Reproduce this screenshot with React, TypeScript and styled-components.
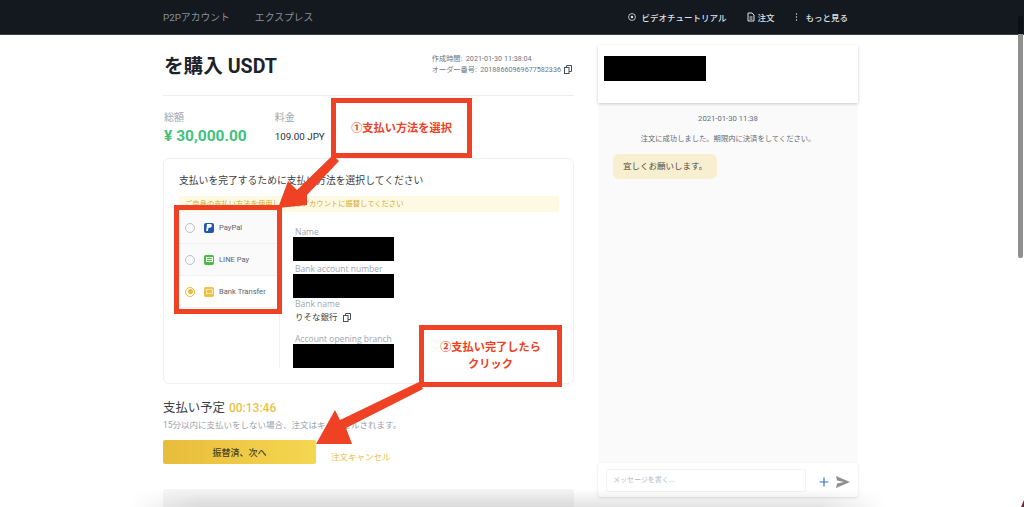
import styled, { createGlobalStyle } from "styled-components";

const GlobalStyle = createGlobalStyle`
    html, body {
        margin: 0;
        padding: 0;
        height: 507px;
        overflow: hidden;
        background: #ffffff;
        font-family: Roboto, "Noto Sans CJK JP", sans-serif;
    }
    * { box-sizing: border-box; }
`;

const Page = styled.div`
    position: relative;
    width: 1024px;
    height: 507px;
    overflow: hidden;
`;

const Header = styled.header`
    height: 35px;
    background: #14181f;
    border-bottom: 1px solid #3c3f44;
    display: flex;
    align-items: center;
    padding: 0 176px 0 163px;
`;

const NavLeft = styled.nav`
    display: flex;
    gap: 25px;
    color: #8a919c;
    font-size: 9.8px;
    flex: 1;
`;

const NavRight = styled.nav`
    display: flex;
    align-items: center;
    gap: 21px;
    color: #dfe2e6;
    font-size: 8.5px;
    font-weight: 500;
`;

const NavItem = styled.span`
    display: flex;
    align-items: center;
    gap: ${props => props.$gap}px;
`;

const Main = styled.main`
    display: flex;
    padding: 10px 0 0 163px;
    gap: 24px;
`;

const OrderColumn = styled.section`
    width: 411px;
    flex: none;
`;

const TitleRow = styled.div`
    height: 51px;
    border-bottom: 1px solid #eceef0;
    display: flex;
    justify-content: space-between;
    padding-right: 2px;
`;

const Title = styled.h1`
    margin: 8px 0 0 1px;
    font-size: 19.6px;
    line-height: 28px;
    font-weight: 700;
    color: #1e2329;
`;

const Meta = styled.div`
    margin-top: 8px;
    font-size: 7.2px;
    line-height: 11px;
    color: #6f7682;
`;

const MetaLine = styled.div`
    display: flex;
    align-items: center;
    gap: 3px;
`;

const Summary = styled.div`
    display: flex;
    gap: 28px;
    height: 62px;
    padding: 15px 0 0 1px;
`;

const SummaryLabel = styled.div`
    font-size: 10px;
    line-height: 14px;
    color: #a0a6b0;
`;

const Amount = styled.div`
    font-size: 15.5px;
    line-height: 22px;
    font-weight: 700;
    color: #3fc27c;
`;

const Fee = styled.div`
    margin-top: 5px;
    font-size: 9.8px;
    line-height: 14px;
    color: #2b3139;
`;

const Card = styled.div`
    height: 226px;
    border: 1px solid #eeeff1;
    border-radius: 6px;
    padding: 15px 14px 0 15px;
`;

const CardTitle = styled.div`
    font-size: 9.8px;
    line-height: 14px;
    color: #3a4048;
`;

const Notice = styled.div`
    margin-top: 8px;
    height: 16px;
    background: #fef9e3;
    color: #d8a92c;
    font-size: 7.3px;
    line-height: 16px;
    padding-left: 6px;
`;

const PayArea = styled.div`
    display: flex;
    height: 156px;
`;

const Methods = styled.div`
    width: 101px;
    flex: none;
    border-right: 1px solid #f0f1f3;
`;

const Method = styled.div`
    height: 32px;
    display: flex;
    align-items: center;
    padding-left: 6px;
    background: ${props => (props.$active ? "#ffffff" : "#fafafa")};
    border-bottom: 1px solid #f1f2f3;
    font-size: 7.6px;
    color: #5b626d;
`;

const Radio = styled.span`
    width: 10px;
    height: 10px;
    border-radius: 50%;
    border: 1px solid ${props => (props.$active ? "#eab93a" : "#bcc0c6")};
    display: flex;
    align-items: center;
    justify-content: center;
    margin-right: 9px;
    &::after {
        content: "";
        width: 5px;
        height: 5px;
        border-radius: 50%;
        background: ${props => (props.$active ? "#eab93a" : "transparent")};
    }
`;

const MethodIcon = styled.span`
    width: 10px;
    height: 10px;
    border-radius: 2px;
    background: ${props => props.$color};
    display: flex;
    align-items: center;
    justify-content: center;
    margin-right: 5px;
`;

const Details = styled.div`
    padding: 14px 0 0 13px;
`;

const FieldLabel = styled.div`
    margin-left: 2px;
    font-family: "Open Sans", sans-serif;
    font-size: 8.5px;
    line-height: 11px;
    color: #a0a6b0;
`;

const Redacted = styled.div`
    background: #000000;
    width: ${props => props.$width}px;
    height: ${props => props.$height}px;
    margin-bottom: ${props => props.$after || 0}px;
`;

const FieldValue = styled.div`
    margin: 2px 0 9px 2px;
    height: 13px;
    font-size: 8.5px;
    line-height: 13px;
    color: #3a4048;
    display: flex;
    align-items: center;
    gap: 5px;
`;

const DueRow = styled.div`
    margin-top: 15px;
    font-size: 12.4px;
    line-height: 18px;
    color: #3a4048;
    display: flex;
    gap: 4px;
`;

const Countdown = styled.span`
    color: #edc146;
    font-size: 12px;
    font-weight: 500;
`;

const DueNote = styled.div`
    margin-top: 2px;
    font-size: 8.5px;
    line-height: 13px;
    color: #9aa0aa;
`;

const ActionRow = styled.div`
    margin-top: 8px;
    display: flex;
    gap: 15px;
    align-items: flex-end;
`;

const PayButton = styled.div`
    width: 153px;
    height: 24px;
    border-radius: 2px;
    background: linear-gradient(90deg, #e8bc3c, #f5d750);
    color: #4a4220;
    font-size: 9px;
    font-weight: 500;
    display: flex;
    align-items: center;
    justify-content: center;
`;

const CancelLink = styled.span`
    font-size: 8.5px;
    line-height: 13px;
    color: #edc146;
`;

const NextPanel = styled.div`
    margin-top: 25px;
    height: 40px;
    background: #f5f5f5;
    border-radius: 3px;
`;

const ChatColumn = styled.aside`
    width: 260px;
    flex: none;
    height: 452px;
    display: flex;
    flex-direction: column;
`;

const ChatHead = styled.div`
    height: 58px;
    background: #ffffff;
    box-shadow: 0 1px 3px rgba(0, 0, 0, 0.2);
    padding: 11px 6px;
    position: relative;
`;

const ChatBody = styled.div`
    flex: 1;
    background: #fafafa;
    padding: 11px 15px 0;
    color: #646a74;
`;

const ChatDate = styled.div`
    text-align: center;
    font-size: 7.7px;
    line-height: 10px;
`;

const ChatNote = styled.div`
    margin-top: 10px;
    text-align: center;
    font-size: 7.3px;
    line-height: 10px;
`;

const Bubble = styled.div`
    display: inline-block;
    margin-top: 10px;
    height: 25px;
    padding: 0 10px;
    border-radius: 6px;
    background: #f8eed0;
    color: #4a4b45;
    font-size: 8.5px;
    line-height: 25px;
`;

const ChatFoot = styled.div`
    height: 34px;
    background: #ffffff;
    box-shadow: 0 1px 3px rgba(0, 0, 0, 0.12);
    border-radius: 0 0 3px 3px;
    display: flex;
    align-items: center;
    padding: 0 8px;
`;

const MessageInput = styled.div`
    width: 200px;
    height: 23px;
    border: 1px solid #f2f3f4;
    border-radius: 2px;
    font-size: 7px;
    line-height: 21px;
    padding-left: 6px;
    color: #b5b9bf;
    margin-right: 13px;
`;

const FootIcons = styled.div`
    display: flex;
    align-items: center;
    gap: 7px;
    margin-top: 4px;
`;

const Scrollbar = styled.div`
    position: absolute;
    top: 16px;
    right: 1px;
    width: 5px;
    height: 242px;
    border-radius: 2px;
    background: linear-gradient(180deg, #0c0f13 18px, #8f8f8f 18px);
`;

const BottomFade = styled.div`
    position: absolute;
    left: 0;
    right: 0;
    bottom: 0;
    height: 18px;
    background: linear-gradient(180deg, rgba(0, 0, 0, 0), rgba(0, 0, 0, 0.11));
    mask-image: linear-gradient(90deg, transparent 130px, #000 200px, #000 820px, transparent 885px);
`;

const Callout = styled.div`
    position: absolute;
    left: ${props => props.$left}px;
    top: ${props => props.$top}px;
    width: ${props => props.$width}px;
    height: ${props => props.$height}px;
    border: 5px solid #ef4123;
    background: ${props => (props.$hollow ? "transparent" : "#ffffff")};
    color: #ef4123;
    font-size: 11.2px;
    font-weight: 700;
    line-height: 17px;
    display: flex;
    flex-direction: column;
    align-items: center;
    justify-content: center;
    text-align: center;
`;

const Arrows = styled.svg`
    position: absolute;
    left: 0;
    top: 0;
`;

const CopyIcon = () => (
    <svg width="8" height="9" viewBox="0 0 8 9" fill="none" stroke="#4a4f57" strokeWidth="1">
        <rect x="0.5" y="2.5" width="4.5" height="6" />
        <path d="M2.5 2.5V0.5H7.5V6.5H5" />
    </svg>
);

const App = () => {
    return (
        <Page>
            <GlobalStyle />
            <Header>
                <NavLeft>
                    <span>P2Pアカウント</span>
                    <span>エクスプレス</span>
                </NavLeft>
                <NavRight>
                    <NavItem $gap={6}>
                        <svg width="8" height="8" viewBox="0 0 10 10" fill="none" stroke="#dfe2e6">
                            <circle cx="5" cy="5" r="4.3" />
                            <circle cx="5" cy="5" r="1.6" fill="#dfe2e6" stroke="none" />
                        </svg>
                        ビデオチュートリアル
                    </NavItem>
                    <NavItem $gap={2}>
                        <svg width="8" height="10" viewBox="0 0 8 10" fill="none" stroke="#dfe2e6">
                            <path d="M1 1H5L7 3V9H1Z" />
                            <path d="M2.5 5H5.5M2.5 7H5.5" />
                        </svg>
                        注文
                    </NavItem>
                    <NavItem $gap={7}>
                        <svg width="3" height="8" viewBox="0 0 3 8" fill="#dfe2e6">
                            <circle cx="1.5" cy="1" r="0.7" />
                            <circle cx="1.5" cy="4" r="0.7" />
                            <circle cx="1.5" cy="7" r="0.7" />
                        </svg>
                        もっと見る
                    </NavItem>
                </NavRight>
            </Header>
            <Main>
                <OrderColumn>
                    <TitleRow>
                        <Title>を購入 USDT</Title>
                        <Meta>
                            <MetaLine>作成時間:&nbsp; 2021-01-30 11:38:04</MetaLine>
                            <MetaLine>オーダー番号:&nbsp; 20188660969677582336 <CopyIcon /></MetaLine>
                        </Meta>
                    </TitleRow>
                    <Summary>
                        <div>
                            <SummaryLabel>総額</SummaryLabel>
                            <Amount>¥ 30,000.00</Amount>
                        </div>
                        <div>
                            <SummaryLabel>料金</SummaryLabel>
                            <Fee>109.00 JPY</Fee>
                        </div>
                    </Summary>
                    <Card>
                        <CardTitle>支払いを完了するために支払い方法を選択してください</CardTitle>
                        <Notice>ご自身の支払い方法を使用し、次のアカウントに振替してください</Notice>
                        <PayArea>
                            <Methods>
                                <Method>
                                    <Radio />
                                    <MethodIcon $color="#2257b0">
                                        <svg width="6" height="7" viewBox="0 0 6 7" fill="#ffffff">
                                            <path d="M1 0H4.2C5.4 0 6 .8 5.8 1.9 5.6 3 4.8 3.8 3.4 3.8H2.4L2 7H.2Z" />
                                        </svg>
                                    </MethodIcon>
                                    PayPal
                                </Method>
                                <Method>
                                    <Radio />
                                    <MethodIcon $color="#45bd3c">
                                        <svg width="7" height="5" viewBox="0 0 7 5" fill="none" stroke="#ffffff">
                                            <rect x="0.5" y="0.5" width="6" height="4" />
                                            <path d="M1 2.5H6" />
                                        </svg>
                                    </MethodIcon>
                                    LINE Pay
                                </Method>
                                <Method $active>
                                    <Radio $active />
                                    <MethodIcon $color="#edc146">
                                        <svg width="7" height="5" viewBox="0 0 7 5" fill="none" stroke="#f9e7ae">
                                            <rect x="0.5" y="0.5" width="6" height="4" />
                                        </svg>
                                    </MethodIcon>
                                    Bank Transfer
                                </Method>
                            </Methods>
                            <Details>
                                <FieldLabel>Name</FieldLabel>
                                <Redacted $width={101} $height={24} $after={2} />
                                <FieldLabel>Bank account number</FieldLabel>
                                <Redacted $width={101} $height={24} />
                                <FieldLabel>Bank name</FieldLabel>
                                <FieldValue>りそな銀行 <CopyIcon /></FieldValue>
                                <FieldLabel>Account opening branch</FieldLabel>
                                <Redacted $width={101} $height={24} />
                            </Details>
                        </PayArea>
                    </Card>
                    <DueRow>
                        支払い予定 <Countdown>00:13:46</Countdown>
                    </DueRow>
                    <DueNote>15分以内に支払いをしない場合、注文はキャンセルされます。</DueNote>
                    <ActionRow>
                        <PayButton>振替済、次へ</PayButton>
                        <CancelLink>注文キャンセル</CancelLink>
                    </ActionRow>
                    <NextPanel />
                </OrderColumn>
                <ChatColumn>
                    <ChatHead>
                        <Redacted $width={102} $height={25} />
                    </ChatHead>
                    <ChatBody>
                        <ChatDate>2021-01-30 11:38</ChatDate>
                        <ChatNote>注文に成功しました。期限内に決済をしてください。</ChatNote>
                        <Bubble>宜しくお願いします。</Bubble>
                    </ChatBody>
                    <ChatFoot>
                        <MessageInput>メッセージを書く...</MessageInput>
                        <FootIcons>
                            <svg width="10" height="10" viewBox="0 0 10 10" stroke="#3d6fd8" strokeWidth="1.2">
                                <path d="M5 0.5V9.5M0.5 5H9.5" />
                            </svg>
                            <svg width="14" height="12" viewBox="0 0 14 12" fill="#8f8f8f">
                                <path d="M0 0L14 6L0 12L1 7.5L8 6L1 4.5Z" />
                            </svg>
                        </FootIcons>
                    </ChatFoot>
                </ChatColumn>
            </Main>
            <Scrollbar />
            <BottomFade />
            <Arrows width="1024" height="507" viewBox="0 0 1024 507" fill="#ef4123">
                <path d="M333 155L339 161L307 195L307 205L278 208L288 181L297 190Z" />
                <path d="M419 382L423 389L346 428L352 444L316 444L335 410L340 420Z" />
                <path d="M1024 500L1021 507L1024 507Z" fill="#7a2040" />
            </Arrows>
            <Callout $left={331} $top={98} $width={141} $height={60}>①支払い方法を選択</Callout>
            <Callout $left={419} $top={325} $width={143} $height={62}>
                <span>②支払い完了したら</span>
                <span>クリック</span>
            </Callout>
            <Callout $left={174} $top={205} $width={108} $height={109} $hollow />
        </Page>
    );
};

export default App;
